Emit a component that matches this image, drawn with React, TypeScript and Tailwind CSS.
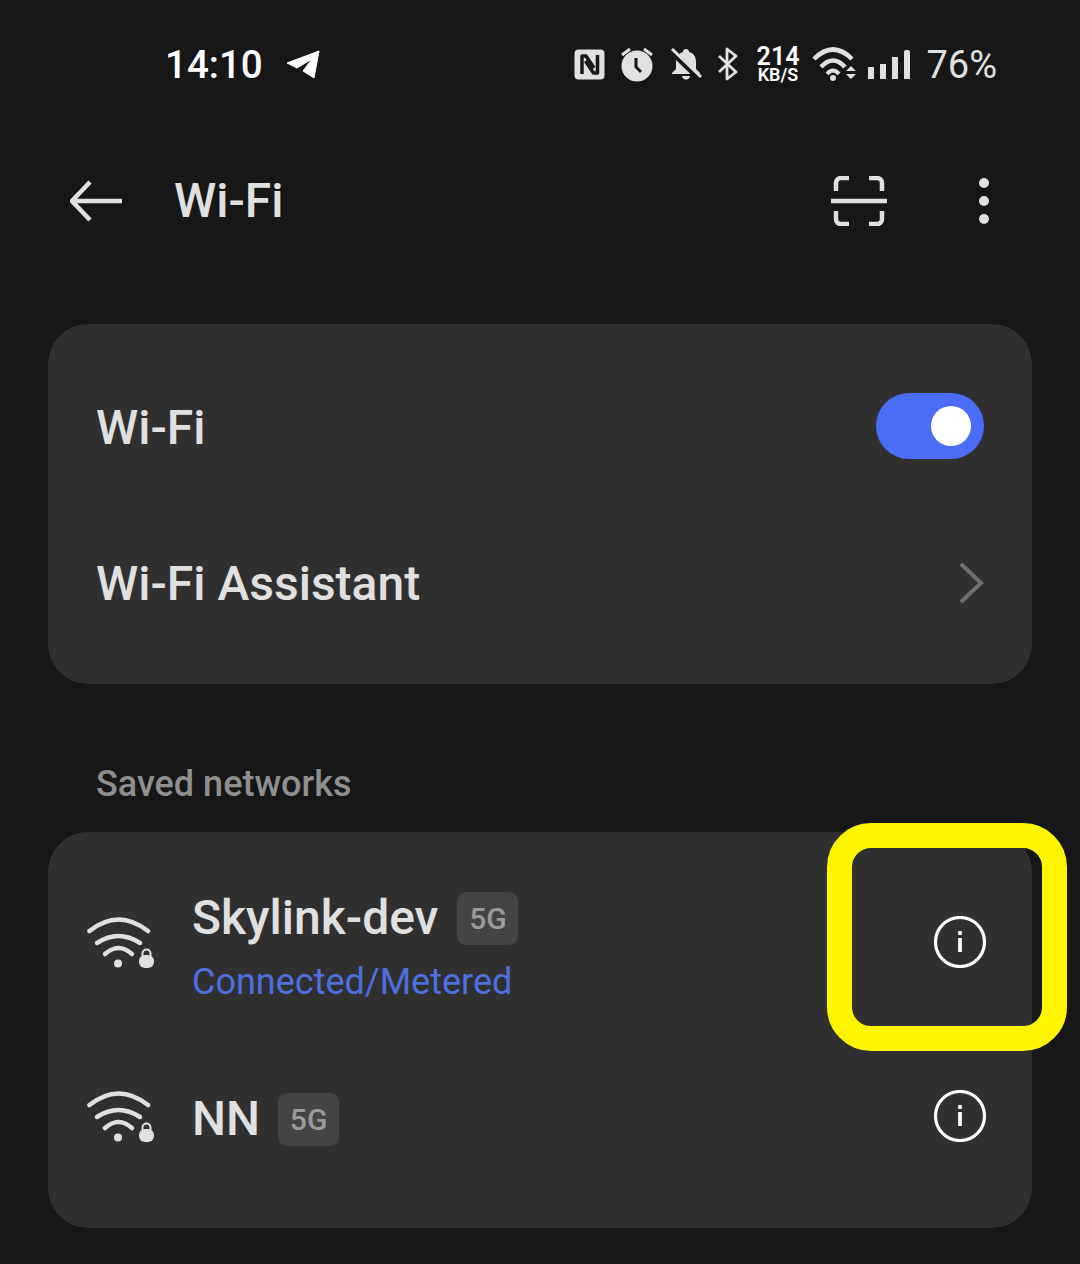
function NfcIcon() {
  return (
    <svg width="31" height="31" viewBox="0 0 31 31" fill="none">
      <rect x="0.5" y="0.5" width="30" height="30" rx="4" fill="#e0e0e0" />
      <path d="M8 25V7h4l8 12" stroke="#171717" strokeWidth="3.500" strokeLinejoin="round" />
      <path d="M23.500 6v18h-4l-8-12" stroke="#171717" strokeWidth="3.500" strokeLinejoin="round" />
    </svg>
  );
}

function AlarmIcon() {
  return (
    <svg width="34" height="36" viewBox="0 0 34 36" fill="none">
      <circle cx="17" cy="20" r="15.500" fill="#e0e0e0" />
      <path d="M16 12v9l5 5" stroke="#171717" strokeWidth="3" />
      <path d="M2 9l8-6M32 9l-8-6" stroke="#e0e0e0" strokeWidth="3" />
    </svg>
  );
}

function BellOffIcon() {
  return (
    <svg width="32" height="32" viewBox="0 0 32 32" fill="none">
      <path
        d="M16 1c2 0 3 1 3 3 5 1 7 5 7 10v7l4 4v1H2v-1l4-4v-7c0-5 3-9 7-10 0-2 1-3 3-3z"
        fill="#e0e0e0"
      />
      <path d="M12 28h8c0 2-2 3.500-4 3.500s-4-1.500-4-3.500z" fill="#e0e0e0" />
      <path d="M1 3l28 27" stroke="#171717" strokeWidth="6" />
      <path d="M2 1l29 28" stroke="#e0e0e0" strokeWidth="3" />
    </svg>
  );
}

function BluetoothIcon() {
  return (
    <svg width="22" height="34" viewBox="0 0 22 34" fill="none">
      <path d="M2 9l17 16-9 7V2l9 7L2 25" stroke="#e0e0e0" strokeWidth="2.800" strokeLinejoin="round" />
    </svg>
  );
}

function StatusWifi() {
  return (
    <svg width="46" height="34" viewBox="0 0 46 34" fill="none">
      <path d="M2 12Q21-7 40 12" stroke="#e0e0e0" strokeWidth="4.500" />
      <path d="M9 20Q21 7 33 20" stroke="#e0e0e0" strokeWidth="4.500" />
      <path d="M15 27Q21 20 27 27" stroke="#e0e0e0" strokeWidth="4" />
      <circle cx="21" cy="31" r="3" fill="#e0e0e0" />
      <path d="M34 24h10l-5-5zM34 27h10l-5 5z" fill="#e0e0e0" />
    </svg>
  );
}

function SignalBars() {
  return (
    <div className="flex items-end gap-[6px] h-[30px]">
      <div className="w-[6px] h-[12px] bg-[#e0e0e0]" />
      <div className="w-[6px] h-[15px] bg-[#e0e0e0]" />
      <div className="w-[6px] h-[22px] bg-[#e0e0e0]" />
      <div className="w-[6px] h-[29px] bg-[#e0e0e0] rounded-t-[2px]" />
    </div>
  );
}

function NetworkWifi() {
  return (
    <svg width="70" height="55" viewBox="0 0 70 55" fill="none">
      <path d="M3.500 16Q32.500-7 62 16" stroke="#e0e0e0" strokeWidth="4.500" strokeLinecap="round" />
      <path d="M11 28Q32.500 14 54 28" stroke="#e0e0e0" strokeWidth="4.500" strokeLinecap="round" />
      <path d="M19 39Q32.500 27 46 39" stroke="#e0e0e0" strokeWidth="4.500" strokeLinecap="round" />
      <circle cx="32" cy="48.500" r="4" fill="#e0e0e0" />
      <rect x="53" y="40" width="15" height="13" rx="6" fill="#e0e0e0" />
      <path d="M56.500 43v-4.500a4 4 0 0 1 8 0V43" stroke="#e0e0e0" strokeWidth="2" />
    </svg>
  );
}

function InfoIcon() {
  return (
    <svg width="52" height="52" viewBox="0 0 52 52" fill="none">
      <circle cx="26" cy="26" r="24.500" stroke="#ffffff" strokeWidth="3.200" />
      <circle cx="26" cy="17" r="2.200" fill="#ffffff" />
      <path d="M26 22v14" stroke="#ffffff" strokeWidth="3.800" />
    </svg>
  );
}

function Badge() {
  return (
    <span className="flex items-center justify-center w-[61px] h-[53px] rounded-[9px] bg-[#444444] text-[#9a9a9a] text-[30px] font-medium">
      5G
    </span>
  );
}

export default function App() {
  return (
    <div
      className="relative w-[1080px] h-[1264px] overflow-hidden bg-[#171717] text-[#e0e0e0]"
      style={{ fontFamily: "Roboto, sans-serif" }}
    >
      {/* status bar */}
      <div className="flex items-center h-[128px] pl-[165px] pr-[83px]">
        <span className="mt-[2px] text-[38.500px] font-medium leading-none text-white">14:10</span>
        <svg className="ml-[23px]" width="34" height="30" viewBox="0 0 34 30" fill="#ffffff">
          <path d="M1 14L33 2l-5 27-11-7 9-12-15 9z" stroke="#ffffff" strokeWidth="1" strokeLinejoin="round" />
        </svg>
        <div className="ml-auto flex items-center">
          <NfcIcon />
          <div className="ml-[15px]"><AlarmIcon /></div>
          <div className="ml-[16px]"><BellOffIcon /></div>
          <div className="ml-[15px]"><BluetoothIcon /></div>
          <div className="ml-[18px] flex flex-col items-center font-semibold text-white leading-none">
            <span className="text-[25px] leading-[21px]">214</span>
            <span className="text-[18px] leading-[16px]">KB/S</span>
          </div>
          <div className="ml-[13px]"><StatusWifi /></div>
          <div className="ml-[10px]"><SignalBars /></div>
          <span className="ml-[16px] mt-[2px] text-[38px] leading-none">76%</span>
        </div>
      </div>

      {/* toolbar */}
      <div className="flex items-center h-[146px] pl-[70px] pr-[91px]">
        <svg width="56" height="42" viewBox="0 0 56 42" fill="none">
          <path d="M52 21H3M20 2L2 21l18 19" stroke="#e0e0e0" strokeWidth="4.500" />
        </svg>
        <span className="ml-[48px] text-[48px] font-medium leading-none">Wi-Fi</span>
        <svg className="ml-auto" width="56" height="50" viewBox="0 0 56 50" fill="none">
          <path
            d="M18 2H10a5 5 0 0 0-5 5v8M38 2h8a5 5 0 0 1 5 5v8M18 48H10a5 5 0 0 1-5-5v-8M38 48h8a5 5 0 0 0 5-5v-8"
            stroke="#e0e0e0"
            strokeWidth="4.500"
          />
          <path d="M0 25h56" stroke="#e0e0e0" strokeWidth="4.500" />
        </svg>
        <div className="ml-[92px] flex flex-col gap-[8px]">
          <div className="w-[10px] h-[10px] rounded-full bg-[#e0e0e0]" />
          <div className="w-[10px] h-[10px] rounded-full bg-[#e0e0e0]" />
          <div className="w-[10px] h-[10px] rounded-full bg-[#e0e0e0]" />
        </div>
      </div>

      {/* main settings */}
      <div className="mx-[48px] mt-[50px] pt-[25px] pb-[23px] pl-[48px] pr-[48px] rounded-[40px] bg-[#303030]">
        <div className="flex items-center justify-between h-[156px]">
          <span className="mt-[2px] text-[48px] font-medium leading-none">Wi-Fi</span>
          <div className="mb-[2px] flex items-center justify-end w-[108px] h-[66px] pr-[13px] rounded-full bg-[#4a6cf7]">
            <div className="w-[40px] h-[40px] rounded-full bg-white" />
          </div>
        </div>
        <div className="flex items-center justify-between h-[156px]">
          <span className="mt-[2px] text-[48px] font-medium leading-none">Wi-Fi Assistant</span>
          <svg width="25" height="42" viewBox="0 0 25 42" fill="none">
            <path d="M2 2l20 19L2 40" stroke="#6f6f6f" strokeWidth="4" />
          </svg>
        </div>
      </div>

      <div className="flex items-center h-[148px] pt-[52px] pl-[96px] text-[36px] font-medium leading-none text-[#8f8f8f]">
        Saved networks
      </div>

      {/* saved networks */}
      <div className="mx-[48px] pt-[23px] pb-[25px] pl-[38px] pr-[46px] rounded-[40px] bg-[#303030]">
        <div className="flex items-center h-[174px]">
          <NetworkWifi />
          <div className="ml-[36px] pt-[11px] flex flex-col">
            <div className="flex items-center gap-[19px] h-[53px]">
              <span className="text-[48px] font-medium leading-none">Skylink-dev</span>
              <Badge />
            </div>
            <span className="mt-[15px] text-[36px] leading-[44px] text-[#4f6fe0]">Connected/Metered</span>
          </div>
          <div className="ml-auto"><InfoIcon /></div>
        </div>
        <div className="flex items-center h-[174px]">
          <NetworkWifi />
          <div className="ml-[36px] mt-[6px] flex items-center gap-[18px]">
            <span className="text-[48px] font-medium leading-none">NN</span>
            <Badge />
          </div>
          <div className="ml-auto"><InfoIcon /></div>
        </div>
      </div>

      {/* highlight drawn over the screenshot */}
      <div className="absolute left-[827px] top-[823px] w-[240px] h-[228px] rounded-[44px] border-[25px] border-[#fff500]" />
    </div>
  );
}
